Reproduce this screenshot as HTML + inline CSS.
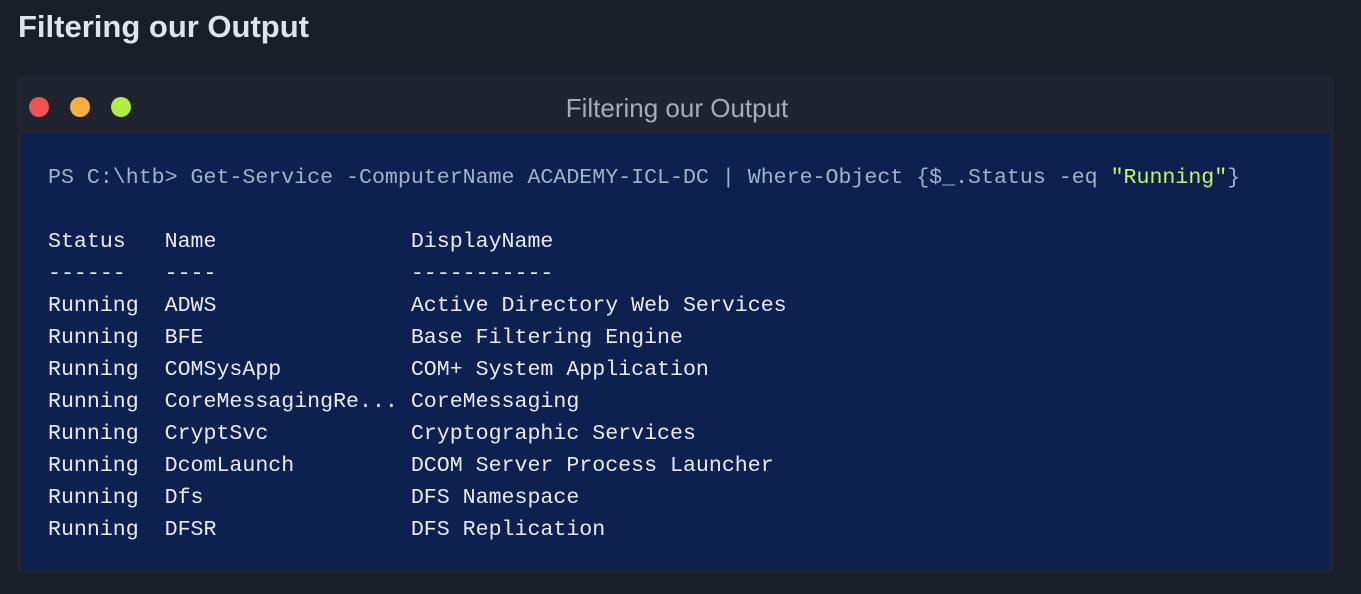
<!DOCTYPE html>
<html><head><style>
html,body{margin:0;padding:0;background:#1a1e29;width:1361px;height:594px;overflow:hidden}
h1{position:absolute;left:18px;top:9px;margin:0;font:bold 31px "Liberation Sans",sans-serif;color:#dfe3ea}
.win{position:absolute;left:17px;top:76px;width:1317px;height:497px;background:#1f2430;border-radius:6px}
.dot{position:absolute;top:97px;width:20px;height:20px;border-radius:50%}
.title{position:absolute;left:0;width:1354px;top:93px;text-align:center;font:26px "Liberation Sans",sans-serif;color:#a4acb9}
.body{position:absolute;left:21px;top:134px;width:1309px;height:436px;background:#0c2150}
pre{position:absolute;left:48px;top:162px;margin:0;font:21.6px/32px "Liberation Mono",monospace;color:#e8ecf3}
.p{color:#a4b1cd}.s{color:#c5f467}
</style></head><body>
<h1>Filtering our Output</h1>
<div class="win"></div>
<div class="dot" style="left:29px;background:#ef5350"></div>
<div class="dot" style="left:70px;background:#f4b13d"></div>
<div class="dot" style="left:111px;background:#b0ee44"></div>
<div class="title">Filtering our Output</div>
<div class="body"></div>
<pre><span class="p">PS C:\htb&gt; Get-Service -ComputerName ACADEMY-ICL-DC | Where-Object {$_.Status -eq <span class="s">"Running"</span>}</span>

Status   Name               DisplayName
------   ----               -----------
Running  ADWS               Active Directory Web Services
Running  BFE                Base Filtering Engine
Running  COMSysApp          COM+ System Application
Running  CoreMessagingRe... CoreMessaging
Running  CryptSvc           Cryptographic Services
Running  DcomLaunch         DCOM Server Process Launcher
Running  Dfs                DFS Namespace
Running  DFSR               DFS Replication</pre>
</body></html>
